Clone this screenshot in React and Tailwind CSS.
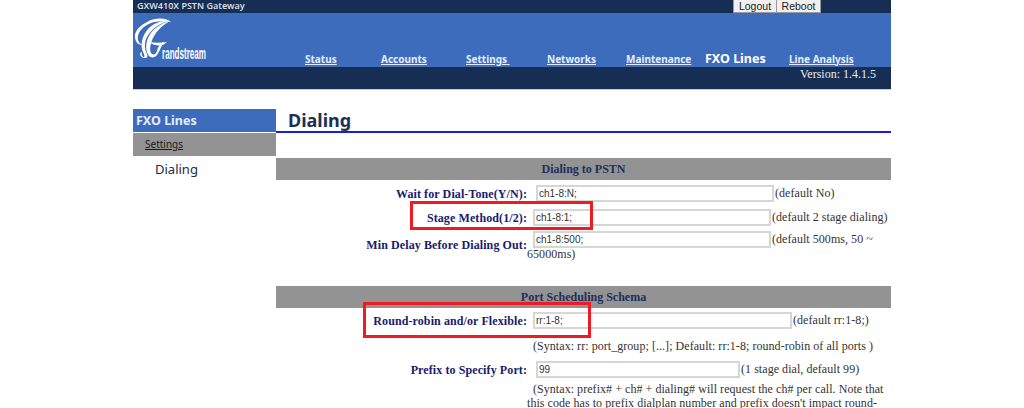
const navItems = [
  { label: 'Status', w: 'w-[76px]' },
  { label: 'Accounts', w: 'w-[85px]' },
  { label: 'Settings\u00a0', w: 'w-[81px]' },
  { label: 'Networks', w: 'w-[79px]' },
  { label: 'Maintenance', w: 'w-[79px]' },
];

const Logo = () => (
  <svg width="76" height="52" viewBox="0 0 76 52" className="shrink-0">
    {/* top swash of the script G */}
    <path
      d="M37 4C33 0 22-1 13 4 5 8 0 14 1 20c1 5 4 7 7 7-3-2-5-5-4-9 1-6 8-12 16-14 6-1 12-1 17 0z"
      fill="#fff"
    />
    {/* main S stroke */}
    <path
      d="M35 3C25 5 16 12 12 21c-2 6-1 11 1 15 1 3 0 4-2 4-3 0-5-2-5-4 0-1 1-2 2-2-1 3 1 5 2 5 1-1 0-3-1-5-3-7-1-16 5-23 5-5 13-9 21-8z"
      fill="#fff"
    />
    <path d="M36 3c-9 2-18 8-22 17-3 7-2 14 1 18 2 2 6 2 8-1 3-4 4-9 7-13-4 1-6 5-7 9-1 3-3 4-5 3-3-2-2-10 1-16 4-8 10-13 17-17z" fill="#fff" />
    {/* bar of the G */}
    <path d="M15 24c6 1 12 1 18 0l-4 3c-5 1-11 0-14-3z" fill="#fff" />
    <text x="28" y="41" fill="#fff" fontFamily="Liberation Sans, sans-serif" fontWeight="700" fontSize="17" textLength="44" lengthAdjust="spacingAndGlyphs">
      randstream
    </text>
  </svg>
);

const Header = () => (
  <div className="w-[758px] ml-[133px] font-['Noto_Sans',sans-serif]">
    <div className="h-[13px] bg-[#172e54] flex justify-between">
      <span className="pl-1 text-[9px] leading-[12px] font-semibold text-[#d5dcea]">GXW410X PSTN Gateway</span>
      <div className="flex mr-[70px] font-['Liberation_Sans',sans-serif] text-[10.5px] leading-[12px] text-[#222]">
        <button className="w-[44px] h-[13px] bg-[#f0f0f0] border border-t-0 border-[#999]">Logout</button>
        <button className="w-[44px] h-[13px] bg-[#f0f0f0] border border-t-0 border-l-0 border-[#999]">Reboot</button>
      </div>
    </div>
    <div className="h-[54px] bg-[#3e6cbd] flex items-start">
      <div className="pt-[5px] pl-px w-[172px] shrink-0">
        <Logo />
      </div>
      <nav className="flex items-center pt-[38px] h-[54px] text-[10px] font-bold text-[#e6ecf7]">
        {navItems.map((item) => (
          <a key={item.label} className={`${item.w} underline`}>{item.label}</a>
        ))}
        <span className="w-[84px] text-[12.5px] text-white">FXO Lines</span>
        <a className="underline">Line Analysis</a>
      </nav>
    </div>
    <div className="h-[23px] bg-[#172e54] border-b border-[#c8ccd2] text-right pr-[15px] font-['Liberation_Serif',serif] text-[12px] leading-[15px] text-[#e8ecf2]">
      Version: 1.4.1.5
    </div>
  </div>
);

const Sidebar = () => (
  <aside className="w-[143px] shrink-0 font-['Noto_Sans',sans-serif]">
    <div className="h-[23px] bg-[#3e6cbd] pl-[3px] text-[12.5px] leading-[24px] font-bold text-[#e6ecf7]">FXO Lines</div>
    <div className="h-[23px] mt-px bg-[#939393] pl-3 text-[10px] leading-[23px] text-[#1b1b1b] underline">Settings</div>
    <div className="pl-[22px] pt-[3px] text-[13px] leading-[20px] text-[#1d2a44]">Dialing</div>
  </aside>
);

const SectionBar = ({ children }) => (
  <div className="h-[22px] bg-[#939393] text-center font-bold text-[12px] leading-[23px] text-[#1e2f5c]">
    {children}
  </div>
);

const Field = ({ label, value, width, gap, hint, className, labelPad = 'pt-px' }) => (
  <div className={`flex items-start ${className}`}>
    <span className={`w-[251px] shrink-0 text-right font-bold text-[12px] leading-[16px] tracking-[0.1px] text-[#1a1a6e] ${labelPad}`}>{label}</span>
    <input
      readOnly
      value={value}
      className={`${width} ${gap} h-[17px] shrink-0 border-2 border-[#d6d6d6] bg-white px-px font-['Liberation_Sans',sans-serif] text-[10px] text-[#333] outline-none`}
    />
    {hint && <span className="pl-px text-[12px] leading-[16px] tracking-[0.05px] text-[#333]">{hint}</span>}
  </div>
);

const Note = ({ children, className }) => (
  <p className={`text-[12px] leading-[14px] tracking-[0.05px] text-[#333] ${className}`}>{children}</p>
);

export default function App() {
  return (
    <div className="relative h-[408px] overflow-hidden bg-white">
      <Header />
      <div className="w-[758px] ml-[133px] mt-[19px] flex">
        <Sidebar />
        <main className="flex-1 font-['Liberation_Serif',serif]">
          <h1 className="h-[24px] border-b-2 border-[#1c1ce0] pl-3 font-['Noto_Sans',sans-serif] font-bold text-[18px] leading-[22px] text-[#1d2f55]">
            Dialing
          </h1>
          <div className="mt-[25px]">
            <SectionBar>Dialing to PSTN</SectionBar>
            <Field className="mt-[5px]" label="Wait for Dial-Tone(Y/N):" value="ch1-8:N;" width="w-[238px]" gap="ml-[9px]" hint="(default No)" />
            <Field className="mt-[7px]" label="Stage Method(1/2):" value="ch1-8:1;" width="w-[238px]" gap="ml-[6px]" hint="(default 2 stage dialing)" />
            <Field className="mt-[5px]" labelPad="pt-[6px]" label="Min Delay Before Dialing Out:" value="ch1-8:500;" width="w-[238px]" gap="ml-[6px]" hint="(default 500ms, 50 ~" />
            <Note className="pl-[251px] -mt-[6px]">65000ms)</Note>
          </div>
          <div className="mt-[25px]">
            <SectionBar>Port Scheduling Schema</SectionBar>
            <Field className="mt-[4px]" label="Round-robin and/or Flexible:" value="rr:1-8;" width="w-[259px]" gap="ml-[6px]" hint="(default rr:1-8;)" />
            <Note className="pl-[257px] mt-[10px]">(Syntax: rr: port_group; [...]; Default: rr:1-8; round-robin of all ports )</Note>
            <Field className="mt-[8px]" label="Prefix to Specify Port:" value="99" width="w-[204px]" gap="ml-[9px]" hint="(1 stage dial, default 99)" />
            <div className="pl-[251px] mt-[4px]">
              <Note className="pl-[6px]">(Syntax: prefix# + ch# + dialing# will request the ch# per call. Note that</Note>
              <Note>this code has to prefix dialplan number and prefix doesn't impact round-</Note>
            </div>
          </div>
        </main>
      </div>
      {/* red annotation boxes */}
      <div className="absolute left-[410px] top-[201px] w-[183px] h-[29px] border-[3px] border-[#ed1c24]" />
      <div className="absolute left-[363px] top-[302px] w-[228px] h-[36px] border-[3px] border-[#ed1c24]" />
    </div>
  );
}
